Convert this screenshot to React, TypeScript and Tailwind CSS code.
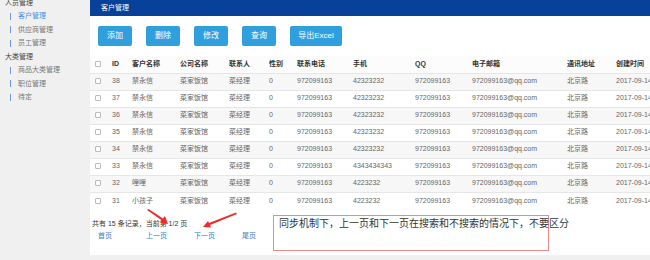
import React from "react";

const rows = [
  { id: 38, name: "禁永信", phone: "42323232" },
  { id: 37, name: "禁永信", phone: "42323232" },
  { id: 36, name: "禁永信", phone: "42323232" },
  { id: 35, name: "禁永信", phone: "42323232" },
  { id: 34, name: "禁永信", phone: "42323232" },
  { id: 33, name: "禁永信", phone: "4343434343" },
  { id: 32, name: "哩哩", phone: "4223232" },
  { id: 31, name: "小孩子", phone: "4223232" },
];

const cols = [
  { label: "", w: "w-[17px]" },
  { label: "ID", w: "w-[20px]" },
  { label: "客户名称", w: "w-[48px]" },
  { label: "公司名称", w: "w-[49px]" },
  { label: "联系人", w: "w-[40px]" },
  { label: "性别", w: "w-[28px]" },
  { label: "联系电话", w: "w-[56px]" },
  { label: "手机", w: "w-[62px]" },
  { label: "QQ", w: "w-[57px]" },
  { label: "电子邮箱", w: "w-[95px]" },
  { label: "通讯地址", w: "w-[49px]" },
  { label: "创建时间", w: "w-[179px]" },
];

const Checkbox = () => (
  <span className="inline-block w-[6px] h-[6px] border border-[#bbb] bg-white rounded-[1px] align-middle" />
);

const SideItem = ({ label, active }: { label: string; active?: boolean }) => (
  <div className="h-[13.5px] flex items-center pl-[10px]">
    <span className="w-[1px] h-[7px] bg-[#6a9bd8]" />
    <span className={`ml-[7px] ${active ? "text-[#4a8ee0]" : "text-[#777]"}`}>{label}</span>
  </div>
);

const SideHead = ({ label }: { label: string }) => (
  <div className="h-[13.5px] flex items-center pl-[5px] text-[#444]">{label}</div>
);

export default function App() {
  return (
    <div
      className="relative w-[650px] h-[260px] bg-[#f0f0f0] flex overflow-hidden text-[7px]"
      style={{ fontFamily: '"Liberation Sans", "Noto Sans CJK SC", sans-serif' }}
    >
      <aside className="w-[90px] shrink-0 -mt-[4px]">
        <SideHead label="人员管理" />
        <SideItem label="客户管理" active />
        <SideItem label="供应商管理" />
        <SideItem label="员工管理" />
        <SideHead label="大类管理" />
        <SideItem label="商品大类管理" />
        <SideItem label="职位管理" />
        <SideItem label="待定" />
      </aside>

      <main className="flex-1 h-[255px] bg-white flex flex-col overflow-hidden">
        <div className="h-[16px] shrink-0 bg-[#08419a] text-white pl-[11px] leading-[16px]">客户管理</div>

        <div className="flex gap-[14px] pl-[8px] pt-[10px]">
          {["添加", "删除", "修改", "查询"].map((b) => (
            <button key={b} className="w-[34px] h-[20px] bg-[#2f9fde] text-white text-[8px] rounded-[2px]">
              {b}
            </button>
          ))}
          <button className="w-[52px] h-[20px] bg-[#2f9fde] text-white text-[8px] rounded-[2px]">导出Excel</button>
        </div>

        <table className="mt-[10px] table-fixed w-[700px] min-w-[700px] border-collapse text-left">
          <thead>
            <tr className="h-[17px] bg-[#fcfcfc] text-[#333] font-bold">
              {cols.map((c, i) => (
                <th key={i} className={`${c.w} pl-[5px] p-0 font-bold whitespace-nowrap overflow-hidden`}>
                  {i === 0 ? <Checkbox /> : c.label}
                </th>
              ))}
            </tr>
          </thead>
          <tbody className="text-[#666]">
            {rows.map((r, i) => (
              <tr key={r.id} className={`h-[17px] border-t border-[#e6e6e6] ${i % 2 === 0 ? "bg-[#f7f7f7]" : "bg-white"}`}>
                <td className="pl-[5px]"><Checkbox /></td>
                <td className="pl-[5px]">{r.id}</td>
                <td className="pl-[5px] whitespace-nowrap">{r.name}</td>
                <td className="pl-[5px] whitespace-nowrap">菜家饭馆</td>
                <td className="pl-[5px] whitespace-nowrap">菜经理</td>
                <td className="pl-[5px]">0</td>
                <td className="pl-[5px]">972099163</td>
                <td className="pl-[5px]">{r.phone}</td>
                <td className="pl-[5px]">972099163</td>
                <td className="pl-[5px] whitespace-nowrap">972099163@qq.com</td>
                <td className="pl-[5px] whitespace-nowrap">北京路</td>
                <td className="pl-[5px] whitespace-nowrap">2017-09-14</td>
              </tr>
            ))}
          </tbody>
        </table>

        <div className="mt-[10px] pl-[2px] leading-[10px] text-[#333]">共有 15 条记录，当前第 1/2 页</div>
        <div className="mt-[2px] pl-[8px] flex leading-[10px] text-[#3b7bc4]">
          {["首页", "上一页", "下一页", "尾页"].map((l) => (
            <span key={l} className="w-[48px]">{l}</span>
          ))}
        </div>
      </main>

      <div className="absolute left-[273px] top-[215px] w-[276px] h-[36px] border border-[#e88a8a]">
        <div className="absolute left-[5px] top-[2px] whitespace-nowrap text-[10px] text-[#333] leading-[12px]">
          同步机制下，上一页和下一页在搜索和不搜索的情况下，不要区分
        </div>
      </div>

      <svg className="absolute left-0 top-0" width="650" height="260">
        <polygon points="147,210 148.5,209 163,218.5 165,216 168,224 160,222.5 162,220.5" fill="#ee2b2b" />
        <polygon points="237,214 236,212.5 209,223 208,221 203,227 211,227.5 210,225" fill="#ee2b2b" />
      </svg>
    </div>
  );
}
